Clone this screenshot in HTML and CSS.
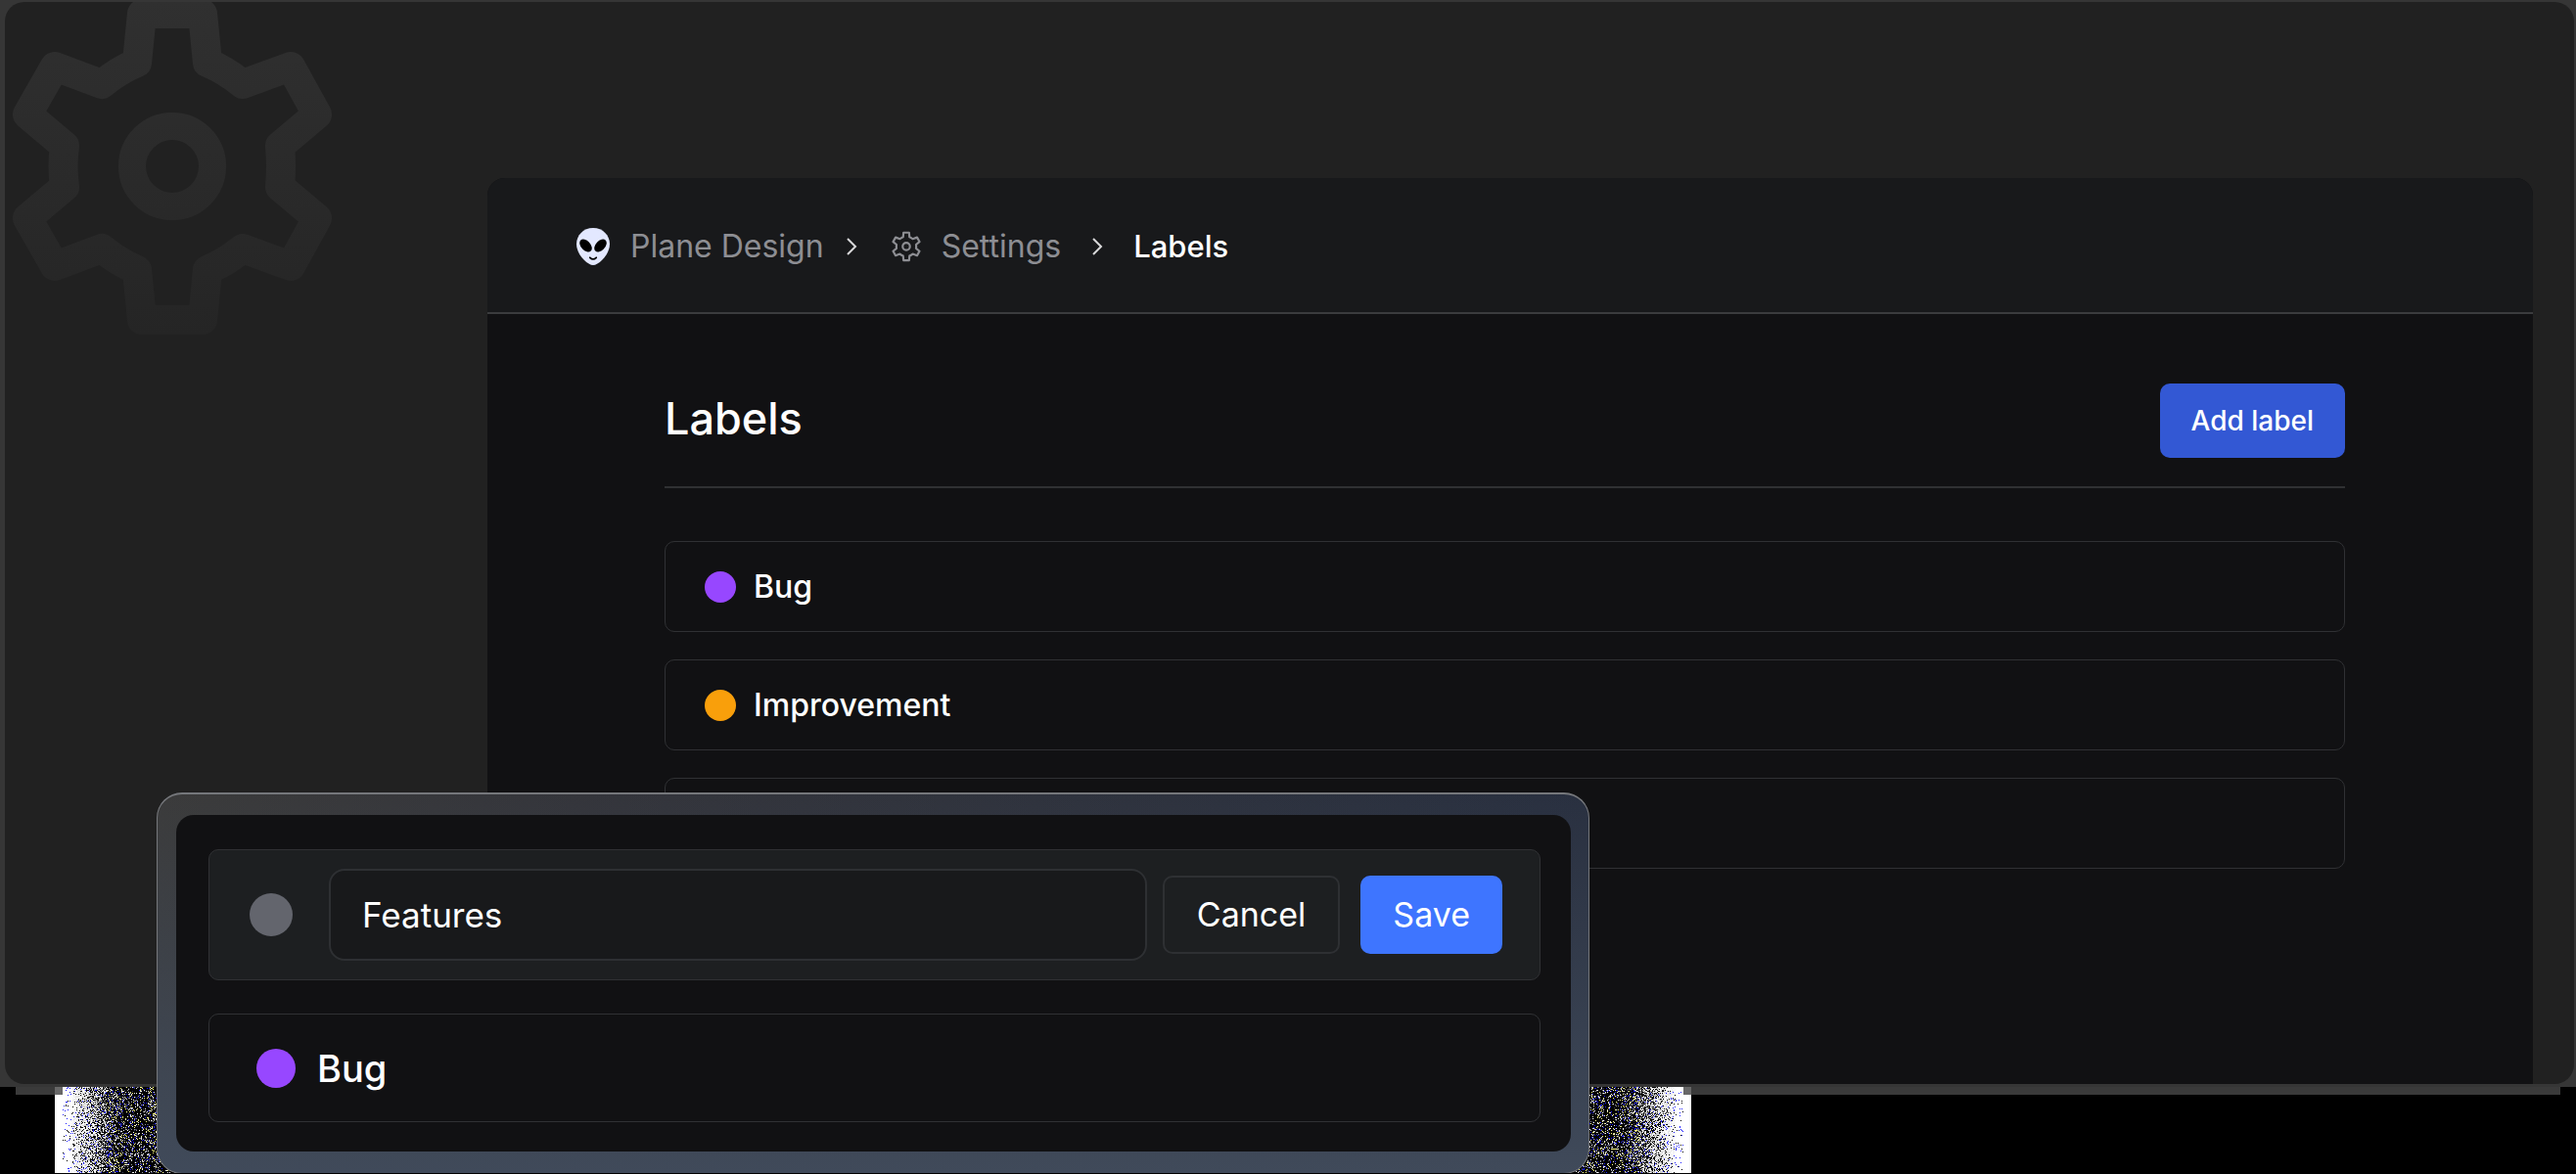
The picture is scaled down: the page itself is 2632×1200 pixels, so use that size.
FILE: index.html
```html
<!DOCTYPE html>
<html lang="en">
<head>
<meta charset="utf-8">
<title>Labels</title>
<meta name="viewport" content="width=device-width, initial-scale=1">
<link rel="stylesheet" href="styles.css">
</head>
<body>
<main class="stage">
  <div class="frame">
    <div class="card">
      <svg class="card-gear" viewBox="0 0 352 342" aria-hidden="true">
        <defs>
          <linearGradient id="gear-fade" gradientUnits="userSpaceOnUse" x1="0" y1="0" x2="0" y2="342">
            <stop offset="0" stop-color="#303030"/>
            <stop offset="1" stop-color="#252525"/>
          </linearGradient>
          <symbol id="gear" viewBox="0 0 352 342">
            <path d="M145 14H207L212 64Q231 72 248 86L297 68L324 117L286 149Q288 170 286 191L324 223L297 272L248 254Q231 268 212 276L207 327H145L140 276Q121 268 104 254L56 272L28 223L66 191Q63 170 66 149L28 117L56 68L104 86Q121 72 140 64Z"/>
            <circle cx="176" cy="170" r="41"/>
          </symbol>
        </defs>
        <g fill="none" stroke="url(#gear-fade)" stroke-width="30" stroke-linejoin="round">
          <path d="M145 14H207L212 64Q231 72 248 86L297 68L324 117L286 149Q288 170 286 191L324 223L297 272L248 254Q231 268 212 276L207 327H145L140 276Q121 268 104 254L56 272L28 223L66 191Q63 170 66 149L28 117L56 68L104 86Q121 72 140 64Z"/>
          <circle cx="176" cy="170" r="41" stroke-width="28"/>
        </g>
      </svg>

      <section class="panel">
        <header class="panel-head">
          <nav class="crumbs" aria-label="Breadcrumb">
            <a class="crumb" href="#">
              <svg class="alien" viewBox="0 0 36 38" aria-hidden="true">
                <path fill="#e3e8ff" d="M18 0C8 0 1 7.500 1 16.500C1 27 12 38 18 38C24 38 35 27 35 16.500C35 7.500 28 0 18 0Z"/>
                <ellipse cx="10.500" cy="18" rx="7.600" ry="4.800" transform="rotate(47 10.500 18)"/>
                <ellipse cx="25.500" cy="18" rx="7.600" ry="4.800" transform="rotate(-47 25.500 18)"/>
                <path fill="none" stroke="#000" stroke-width="1.800" stroke-linecap="round" d="M14.800 30.300Q18 33.500 21.200 30.300"/>
              </svg>
              Plane Design
            </a>
            <svg class="chevron" viewBox="0 0 12 20" aria-hidden="true"><path d="M2 2L10 10L2 18"/></svg>
            <a class="crumb inner" href="#">
              <svg class="gear" aria-hidden="true"><use href="#gear"/></svg>
              Settings
            </a>
            <svg class="chevron" viewBox="0 0 12 20" aria-hidden="true"><path d="M2 2L10 10L2 18"/></svg>
            <span class="crumb current" aria-current="page">Labels</span>
          </nav>
        </header>

        <div class="panel-body">
          <div class="title-row">
            <h1 class="title">Labels</h1>
            <button class="add" type="button">Add label</button>
          </div>
          <ul class="labels">
            <li class="label"><span class="dot purple"></span>Bug</li>
            <li class="label"><span class="dot orange"></span>Improvement</li>
            <li class="label"></li>
          </ul>
        </div>
      </section>
    </div>
  </div>

  <div class="base">
    <div class="base-edge"></div>
    <canvas class="grain" width="1672" height="88"></canvas>
  </div>

  <section class="dialog" aria-label="Edit labels">
    <div class="dialog-body">
      <form class="edit">
        <span class="swatch"></span>
        <input class="name" type="text" value="Features" aria-label="Label name">
        <button class="btn cancel" type="button">Cancel</button>
        <button class="btn save" type="button">Save</button>
      </form>
      <div class="item"><span class="dot large purple"></span>Bug</div>
    </div>
  </section>
</main>
<script src="grain.js"></script>
</body>
</html>
```

FILE: styles.css
```css
* {
  box-sizing: border-box;
}

body {
  margin: 0;
  background: #000;
  color: #fff;
  font-family: Inter, "Liberation Sans", sans-serif;
  font-size: 32px;
  line-height: 40px;
}

button,
input {
  font: inherit;
  color: inherit;
}

.stage {
  position: relative;
}

.frame {
  padding: 2px 2px 3px 5px;
  background: #363636;
}

.card {
  position: relative;
  padding: 180px 42px 0 493px;
  border-radius: 20px;
  overflow: hidden;
  background: #212121;
}

.card-gear {
  position: absolute;
  top: -2px;
  left: -5px;
  width: 352px;
  height: 342px;
}

/* Main panel */

.panel {
  position: relative;
  border-radius: 18px 18px 0 0;
  overflow: hidden;
  background: #111113;
}

.panel-head {
  padding: 50px 90px 47px;
  border-bottom: 2px solid #3b3c3e;
  background: #18191b;
}

.crumbs {
  display: flex;
  align-items: center;
  gap: 22px;
}

.crumb {
  display: flex;
  align-items: center;
  gap: 20px;
  color: #8d8e93;
  text-decoration: none;
}

.crumb.inner {
  margin: 0 9px 0 12px;
}

.crumb.current {
  margin-left: 9px;
  color: #fff;
  font-size: 31px;
  font-weight: 500;
}

.alien {
  width: 36px;
  height: 38px;
}

.gear {
  width: 32px;
  height: 32px;
  fill: none;
  stroke: #8d8e93;
  stroke-width: 24;
  stroke-linejoin: round;
}

.chevron {
  width: 12px;
  height: 20px;
  fill: none;
  stroke: #d8d8da;
  stroke-width: 2;
}

.panel-body {
  padding: 71px 192px 220px 181px;
}

.title-row {
  display: flex;
  align-items: flex-start;
  justify-content: space-between;
  padding-bottom: 29px;
  border-bottom: 2px solid #303133;
}

.title {
  margin: 8px 0 0;
  font-size: 45px;
  line-height: 56px;
  font-weight: 500;
}

.add {
  height: 76px;
  padding: 0 32px;
  border: 0;
  border-radius: 10px;
  background: #3358d4;
  font-size: 28px;
  font-weight: 500;
}

.labels {
  display: grid;
  gap: 28px;
  margin: 54px 0 0;
  padding: 0;
  list-style: none;
}

.label {
  display: flex;
  align-items: center;
  gap: 18px;
  height: 93px;
  padding: 0 40px;
  border: 1px solid #303134;
  border-radius: 10px;
  font-weight: 500;
}

.dot {
  width: 32px;
  height: 32px;
  border-radius: 50%;
}

.dot.large {
  width: 40px;
  height: 40px;
}

.purple {
  background: #9747ff;
}

.orange {
  background: #f99f0b;
}

/* Bottom edge of the frame, with the dialog's grain over it */

.base {
  display: grid;
}

.base-edge,
.grain {
  grid-area: 1 / 1;
}

.base-edge {
  height: 8px;
  margin: 0 16px;
  background: #3a3a3a;
}

.grain {
  margin-left: 56px;
}

/* Dialog */

.dialog {
  position: absolute;
  top: 810px;
  left: 160px;
  width: 1464px;
  max-width: calc(100% - 320px);
  padding: 21px 18px 22px 19px;
  border: 1px solid #75777b;
  border-top-width: 2px;
  border-radius: 26px;
  background:
    linear-gradient(to bottom, transparent, #404a5a) border-box,
    linear-gradient(to right, #3b3b3b, #34353b 30%, #293040) border-box;
}

.dialog-body {
  display: grid;
  gap: 34px;
  padding: 35px 31px 30px 33px;
  border-radius: 18px;
  background: #111113;
}

.edit,
.item {
  display: flex;
  align-items: center;
  border: 1px solid #303134;
  border-radius: 10px;
}

.edit {
  height: 134px;
  padding: 0 38px 0 41px;
  background: #1d1f21;
}

.swatch {
  width: 44px;
  height: 44px;
  margin-right: 37px;
  border-radius: 50%;
  background: #63656d;
}

.name {
  flex: 1;
  min-width: 0;
  height: 94px;
  padding: 0 32px;
  border: 2px solid #2e3033;
  border-radius: 16px;
  background: #18191b;
  font-size: 35px;
}

.btn {
  height: 80px;
  border-radius: 10px;
  font-size: 34px;
}

.cancel {
  margin: 0 21px 0 16px;
  padding: 0 33px;
  border: 2px solid #2e3033;
  background: transparent;
}

.save {
  padding: 0 33px;
  border: 0;
  background: #3e75ff;
}

.item {
  gap: 22px;
  height: 111px;
  padding: 0 48px;
  font-size: 38px;
  font-weight: 500;
}
```

FILE: grain.js
```javascript
// Grain that fades from white at the outer edges to black under the dialog.
const canvas = document.querySelector('.grain');
const ctx = canvas.getContext('2d');
const { width, height } = canvas;
const image = ctx.createImageData(width, height);
const colours = [[255, 255, 255], [255, 255, 130], [30, 30, 255], [235, 235, 235], [150, 150, 160], [60, 60, 90]];
let seed = 7;

function random() {
  seed = (seed * 1664525 + 1013904223) % 4294967296;
  return seed / 4294967296;
}

for (let y = 0; y < height; y++) {
  for (let x = 0; x < width; x++) {
    const d = Math.min(x, width - 1 - x);
    let colour = [255, 255, 255];
    let alpha = 255;
    if (d < 8) {
      alpha = y < 8 ? 60 : 255;
    } else {
      const dark = Math.min(0.74, Math.max(0.02, (d - 14) / 75));
      const grey = Math.max(110, 255 - Math.max(0, d - 14) * 3);
      const r = random();
      if (r < dark) {
        colour = [0, 0, 0];
      } else if (d > 52) {
        colour = colours[Math.floor(random() * colours.length)];
      } else if (r > 0.96) {
        colour = [30, 30, 255];
      } else if (random() < 0.5) {
        colour = [grey, grey, grey];
      }
    }
    image.data.set([...colour, alpha], (y * width + x) * 4);
  }
}
ctx.putImageData(image, 0, 0);
```
